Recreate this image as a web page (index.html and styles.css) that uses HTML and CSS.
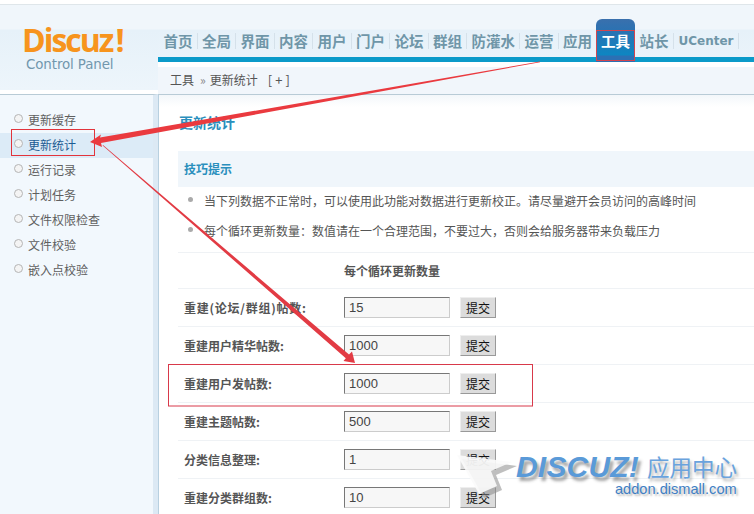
FILE: index.html
```html
<!DOCTYPE html>
<html lang="zh-CN">
<head>
<meta charset="utf-8">
<title>更新统计</title>
<link rel="stylesheet" href="styles.css">
</head>
<body>
<div class="page">
  <aside class="side">
    <div class="logo">
      <div class="logo-mark">Discuz<span class="logo-bang">!</span></div>
      <div class="logo-sub">Control Panel</div>
    </div>
    <ul class="menu">
      <li class="menu-item">更新缓存</li>
      <li class="menu-item menu-active">更新统计</li>
      <li class="menu-item">运行记录</li>
      <li class="menu-item">计划任务</li>
      <li class="menu-item">文件权限检查</li>
      <li class="menu-item">文件校验</li>
      <li class="menu-item">嵌入点校验</li>
    </ul>
  </aside>
  <main class="main">
    <nav class="nav">
      <a class="nav-item">首页</a>
      <a class="nav-item">全局</a>
      <a class="nav-item">界面</a>
      <a class="nav-item">内容</a>
      <a class="nav-item">用户</a>
      <a class="nav-item">门户</a>
      <a class="nav-item">论坛</a>
      <a class="nav-item">群组</a>
      <a class="nav-item">防灌水</a>
      <a class="nav-item">运营</a>
      <a class="nav-item nav-plain">应用</a>
      <a class="nav-tab">工具</a>
      <a class="nav-item">站长</a>
      <a class="nav-item nav-latin">UCenter</a>
    </nav>
    <div class="crumb">工具<span class="crumb-sep">»</span>更新统计<span class="crumb-add">[+]</span></div>
    <section class="content">
      <h3 class="title">更新统计</h3>
      <div class="tips-head">技巧提示</div>
      <ul class="tips">
        <li class="tip">当下列数据不正常时，可以使用此功能对数据进行更新校正。请尽量避开会员访问的高峰时间</li>
        <li class="tip">每个循环更新数量：数值请在一个合理范围，不要过大，否则会给服务器带来负载压力</li>
      </ul>
      <div class="row row-head"><span class="label"></span><b>每个循环更新数量</b></div>
      <div class="row"><span class="label label-wide">重建(论坛/群组)帖数:</span><input class="field" value="15"><button class="btn">提交</button></div>
      <div class="row"><span class="label">重建用户精华帖数:</span><input class="field" value="1000"><button class="btn">提交</button></div>
      <div class="row"><span class="label">重建用户发帖数:</span><input class="field" value="1000"><button class="btn">提交</button></div>
      <div class="row"><span class="label">重建主题帖数:</span><input class="field" value="500"><button class="btn">提交</button></div>
      <div class="row"><span class="label">分类信息整理:</span><input class="field" value="1"><button class="btn">提交</button></div>
      <div class="row"><span class="label">重建分类群组数:</span><input class="field" value="10"><button class="btn">提交</button></div>
    </section>
  </main>

  <svg class="marks" width="754" height="514" viewBox="0 0 754 514" aria-hidden="true">
    <rect x="596.5" y="30.5" width="38" height="30" fill="none" stroke="#d2454f"/>
    <rect x="11.5" y="129.5" width="83" height="26" fill="none" stroke="#e2343c"/>
    <rect x="168.5" y="364.5" width="364" height="41.5" fill="none" stroke="#d8394a"/>
    <polygon points="90,142 101,134.5 100,137.5 540,61.5 540,62.2 101,143 102,147" fill="#ea3a3f"/>
    <polygon points="103,145 349,354.6 352,351.4 355,363 343.5,361 345.8,358.2 102.6,145.6" fill="#e23b44"/>
    <polygon points="459,456 514,463 493,472 499,487 481,495" fill="#8b8b8b" opacity=".55" transform="translate(3 3)"/>
    <polygon points="457,455 512,462 491,471 497,486 479,494" fill="#fbfbfb" opacity=".9"/>
  </svg>
  <div class="stamp">
    <div class="stamp-top"><span class="stamp-brand">DISCUZ!</span><span class="stamp-cn">应用中心</span></div>
    <div class="stamp-url">addon.dismall.com</div>
  </div>
</div>
</body>
</html>
```

FILE: styles.css
```css
* { box-sizing: border-box; }
html, body { margin: 0; padding: 0; background: #fff; }
.page {
  position: relative;
  display: flex;
  width: 754px;
  height: 514px;
  overflow: hidden;
  padding-top: 4px;
  font: 12px/16px "Noto Sans CJK SC", "Liberation Sans", sans-serif;
  color: #555;
}
.side { width: 158px; flex: none; display: flex; flex-direction: column; }
.logo {
  height: 86px;
  margin-bottom: 4px;
  border-top: 1px solid #dfe6ea;
  padding: 18px 0 0 22px;
  background: linear-gradient(#f0f6fb 0, #f0f6fb 24px, #e6f1f9 25px, #edf5fb 85px);
}
.logo-mark {
  height: 33px;
  font: bold 32px/33px "Open Sans", "Liberation Sans", sans-serif;
  letter-spacing: -2px;
  color: #f7941d;
}
.logo-bang { margin-left: 3px; }
.logo-sub {
  margin: 1px 0 0 4px;
  font: 13.4px/16px "DejaVu Sans", sans-serif;
  letter-spacing: -.1px;
  color: #7197ad;
}
.menu {
  flex: 1;
  list-style: none;
  margin: 0;
  padding: 13px 0 0;
  border-top: 1px solid #b8cbd6;
  border-right: 5px solid #dce9f4;
  background: #f2f8fd;
}
.menu-item {
  position: relative;
  height: 25px;
  padding: 4px 0 0 28px;
  line-height: 16px;
  color: #5f5f5f;
}
.menu-item::before {
  content: "";
  position: absolute;
  left: 14px;
  top: 6px;
  width: 7px;
  height: 7px;
  border: 1px solid #b5b5b5;
  border-radius: 50%;
  background: #f4f4f4;
}
.menu-active { background: #dcebf7; color: #1c5c93; }
.main { flex: 1; min-width: 0; display: flex; flex-direction: column; }
.nav {
  display: flex;
  align-items: flex-end;
  height: 58px;
  padding-left: 1px;
  border-top: 1px solid #dfe6ea;
  border-bottom: 5px solid #0b9ac9;
  background: linear-gradient(#f0f6fb 0, #f0f6fb 24px, #e6f1f9 25px, #eaf3fa 52px);
  font-weight: bold;
  font-size: 14.5px;
  color: #6f96a8;
}
.nav-item {
  height: 16px;
  margin-bottom: 8px;
  padding: 0 4px 0 4.5px;
  border-right: 1px solid #d5e1ea;
  line-height: 16px;
}
.nav-plain { border-right: 0; padding-right: 4px; }
.nav-latin { font: bold 12px/16px "DejaVu Sans", sans-serif; padding-left: 5px; }
.nav-tab {
  width: 39px;
  height: 43px;
  margin-bottom: -5px;
  padding-top: 14px;
  border-radius: 6px 6px 0 0;
  background: linear-gradient(#3a70ad 0, #2a72b2 12px, #0d86c2 36px, #2b70b4 37px);
  color: #fff;
  line-height: 16px;
  text-align: center;
}
.crumb {
  height: 28px;
  margin-top: 5px;
  padding: 5px 0 0 12px;
  border-bottom: 1px solid #b8cbd6;
  background: #f1f6fb;
  line-height: 16px;
}
.crumb-sep { margin: 0 4px 0 6px; color: #888; }
.crumb-add { margin-left: 10px; font-size: 13px; letter-spacing: 3px; }
.content {
  flex: 1;
  min-height: 0;
  padding: 19px 0 0 19px;
  border-left: 1px solid #b8d0e0;
  background: linear-gradient(#f3f7fa 0, #fff 12px);
}
.title {
  margin: 0;
  height: 37px;
  padding-left: 1px;
  font: bold 14px/16px "Noto Sans CJK SC", sans-serif;
  color: #2a8fbd;
}
.tips-head {
  height: 36px;
  padding: 10px 0 0 6px;
  background: #f0f6fb;
  font-weight: bold;
  line-height: 16px;
  color: #2a8fbd;
}
.tips { list-style: none; margin: 0; padding: 0 0 0 26px; height: 65px; }
.tip {
  position: relative;
  height: 30px;
  padding-top: 6px;
  line-height: 16px;
  white-space: nowrap;
}
.tip::before {
  content: "";
  position: absolute;
  left: -16px;
  top: 10px;
  width: 5px;
  height: 5px;
  border-radius: 50%;
  background: #aaa;
}
.row {
  display: flex;
  align-items: center;
  height: 38px;
  border-top: 1px solid #eff2f5;
}
.row-head { height: 36px; }
.label {
  width: 166px;
  padding-left: 6px;
  font-weight: bold;
  color: #555;
  white-space: nowrap;
}
.label-wide { letter-spacing: .75px; }
.field {
  width: 106px;
  height: 21px;
  padding: 0 0 1px 4px;
  margin: 0;
  border: 1px solid;
  border-color: #777 #ccc #ccc #777;
  background: #f7f7f7;
  font: 13px "Liberation Sans", sans-serif;
  color: #444;
  outline: 0;
}
.btn {
  width: 36px;
  height: 21px;
  margin: 0 0 0 10px;
  padding: 0;
  border: 1px solid;
  border-color: #eee #999 #999 #eee;
  background: #dcdcdc;
  font: 12px/16px "Noto Sans CJK SC", sans-serif;
  color: #111;
}
.marks { position: absolute; left: 0; top: 0; pointer-events: none; }
.stamp { position: absolute; left: 516px; top: 452px; width: 224px; }
.stamp-top { display: flex; align-items: center; height: 29px; }
.stamp-brand {
  width: 131px;
  font: italic bold 30px/29px "Liberation Sans", sans-serif;
  letter-spacing: .2px;
  color: #5a9ad8;
  text-shadow: 3px 4px 3px rgba(60, 60, 60, .45);
  white-space: nowrap;
}
.stamp-cn {
  font: 22.5px/29px "Noto Sans CJK SC", sans-serif;
  color: #6aa3dd;
  text-shadow: 2px 3px 3px rgba(60, 60, 60, .4);
}
.stamp-url {
  margin: 0 0 0 99px;
  font: 14.6px/16px "Liberation Sans", sans-serif;
  color: #3f7fc4;
  white-space: nowrap;
  text-shadow: 2px 2px 2px rgba(60, 60, 60, .35);
}
```
